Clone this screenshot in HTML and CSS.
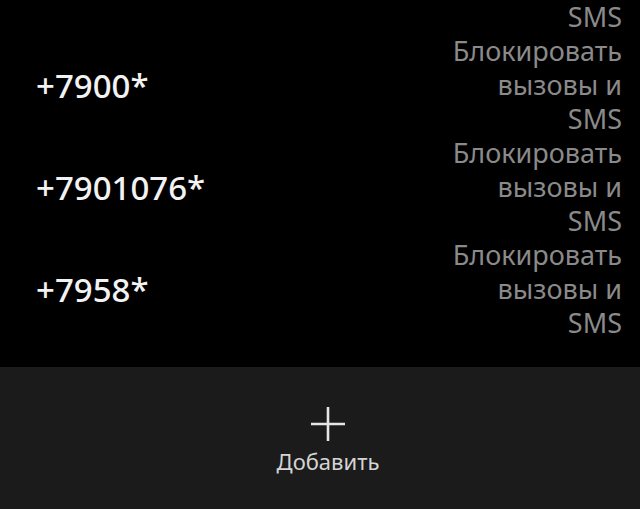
FILE: index.html
```html
<!DOCTYPE html>
<html>
<head>
  <title>Черный список</title>
  <link rel="stylesheet" href="styles.css">
</head>
<body>
  <div id=list>
    <div class=rows>
      <div class=row>
        <div class=number>+7495*</div>
        <div class=action>Блокировать вызовы и SMS</div>
      </div>
      <div class=row>
        <div class=number>+7900*</div>
        <div class=action>Блокировать вызовы и SMS</div>
      </div>
      <div class=row>
        <div class=number>+7901076*</div>
        <div class=action>Блокировать вызовы и SMS</div>
      </div>
      <div class=row>
        <div class=number>+7958*</div>
        <div class=action>Блокировать вызовы и SMS</div>
      </div>
    </div>
  </div>
  <div id=bar>
    <div class=add>
      <svg class=plus width=36 height=36 viewBox="0 0 36 36">
        <path d="M18 1v34M1 18h34" stroke="#e6e6e6" stroke-width="2.6" fill="none"/>
      </svg>
      <div class=label>Добавить</div>
    </div>
  </div>
</body>
</html>
```

FILE: styles.css
```css
body, html {
  height: 100%;
  width: 100%;
  margin: 0;
  background: #000;
  font-family: "Noto Sans", Roboto, sans-serif;
}
body {
  display: flex;
  flex-direction: column;
}
#list {
  height: 367px;
  overflow: hidden;
}
.rows {
  margin-top: -68px;
}
.row {
  display: flex;
  align-items: center;
  justify-content: space-between;
  padding: 0 18px 0 36px;
}
.number {
  color: #f2f2f2;
  font-size: 33px;
  font-weight: 500;
}
.action {
  width: 176px;
  color: #8a8a8a;
  font-size: 27px;
  line-height: 34px;
  text-align: right;
}
#bar {
  flex: 1;
  background: #1b1b1b;
  display: flex;
  justify-content: center;
  padding: 39px 0 0 16px;
}
.add {
  display: flex;
  flex-direction: column;
  align-items: center;
}
.plus {
  display: block;
}
.label {
  margin-top: 4px;
  color: #d4d4d4;
  font-size: 22px;
  line-height: 30px;
}
```
